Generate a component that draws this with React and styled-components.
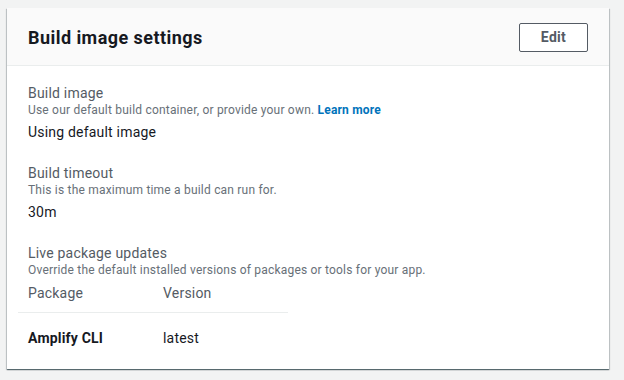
import styled, { createGlobalStyle } from 'styled-components';

const GlobalStyle = createGlobalStyle`
  html, body {
    margin: 0;
    padding: 0;
    background: #f2f3f3;
  }
  body {
    font-family: Roboto, 'Liberation Sans', Arial, sans-serif;
    letter-spacing: 0.2px;
    -webkit-font-smoothing: antialiased;
  }
`;

const Page = styled.div`
  padding: 8px 15px 12px 7px;
  min-height: 380px;
  box-sizing: border-box;
`;

const Card = styled.section`
  background: #fff;
  box-shadow: 0 1px 1px 0 rgba(0, 28, 36, 0.5), 1px 1px 1px 0 rgba(0, 28, 36, 0.15),
    -1px 1px 1px 0 rgba(0, 28, 36, 0.15);
`;

const Header = styled.header`
  display: flex;
  align-items: center;
  justify-content: space-between;
  height: 58px;
  box-sizing: border-box;
  padding: 0 21px;
  background: #fafafa;
  border-bottom: 1px solid #eaeded;
`;

const Title = styled.h2`
  margin: 1px 0 0;
  font-size: 18px;
  font-weight: 700;
  color: #16191f;
  letter-spacing: 0.45px;
`;

const Button = styled.button`
  width: 69px;
  height: 29px;
  background: #fff;
  border: 1px solid #545b64;
  border-radius: 2px;
  color: #545b64;
  font-family: inherit;
  font-size: 14px;
  font-weight: 700;
  letter-spacing: 0.3px;
  cursor: pointer;
  margin-top: 1px;
`;

const Body = styled.div`
  display: flex;
  flex-direction: column;
  gap: 21px;
  padding: 18px 21px 20px;
`;

const Field = styled.div`
  display: flex;
  flex-direction: column;
`;

const Label = styled.div`
  font-size: 14px;
  line-height: 18px;
  color: #545b64;
`;

const Description = styled.div`
  font-size: 12px;
  line-height: 16px;
  color: #687078;
`;

const Link = styled.a`
  color: #0073bb;
  font-weight: 700;
  text-decoration: none;
`;

const Value = styled.div`
  margin-top: 3px;
  font-size: 14px;
  line-height: 22px;
  color: #16191f;
`;

const Table = styled.table`
  margin-left: -10px;
  width: 270px;
  table-layout: fixed;
  border-collapse: collapse;
  font-size: 14px;
  line-height: 22px;
`;

const Th = styled.th`
  box-sizing: border-box;
  text-align: left;
  font-weight: 400;
  color: #545b64;
  padding: 4px 10px 8px;
  border-bottom: 1px solid #eaeded;
  width: ${(p) => p.$width || 'auto'};
`;

const Td = styled.td`
  padding: 14px 10px 0;
  color: #16191f;
  font-weight: ${(p) => (p.$bold ? 700 : 400)};
`;

const packages = [{ name: 'Amplify CLI', version: 'latest' }];

export default function App() {
  return (
    <>
      <GlobalStyle />
      <Page>
        <Card>
          <Header>
            <Title>Build image settings</Title>
            <Button>Edit</Button>
          </Header>
          <Body>
            <Field>
              <Label>Build image</Label>
              <Description>
                Use our default build container, or provide your own. <Link href="#">Learn more</Link>
              </Description>
              <Value>Using default image</Value>
            </Field>
            <Field>
              <Label>Build timeout</Label>
              <Description>This is the maximum time a build can run for.</Description>
              <Value>30m</Value>
            </Field>
            <Field>
              <Label>Live package updates</Label>
              <Description>Override the default installed versions of packages or tools for your app.</Description>
              <Table>
                <thead>
                  <tr>
                    <Th $width="135px">Package</Th>
                    <Th>Version</Th>
                  </tr>
                </thead>
                <tbody>
                  {packages.map((p) => (
                    <tr key={p.name}>
                      <Td $bold>{p.name}</Td>
                      <Td>{p.version}</Td>
                    </tr>
                  ))}
                </tbody>
              </Table>
            </Field>
          </Body>
        </Card>
      </Page>
    </>
  );
}
